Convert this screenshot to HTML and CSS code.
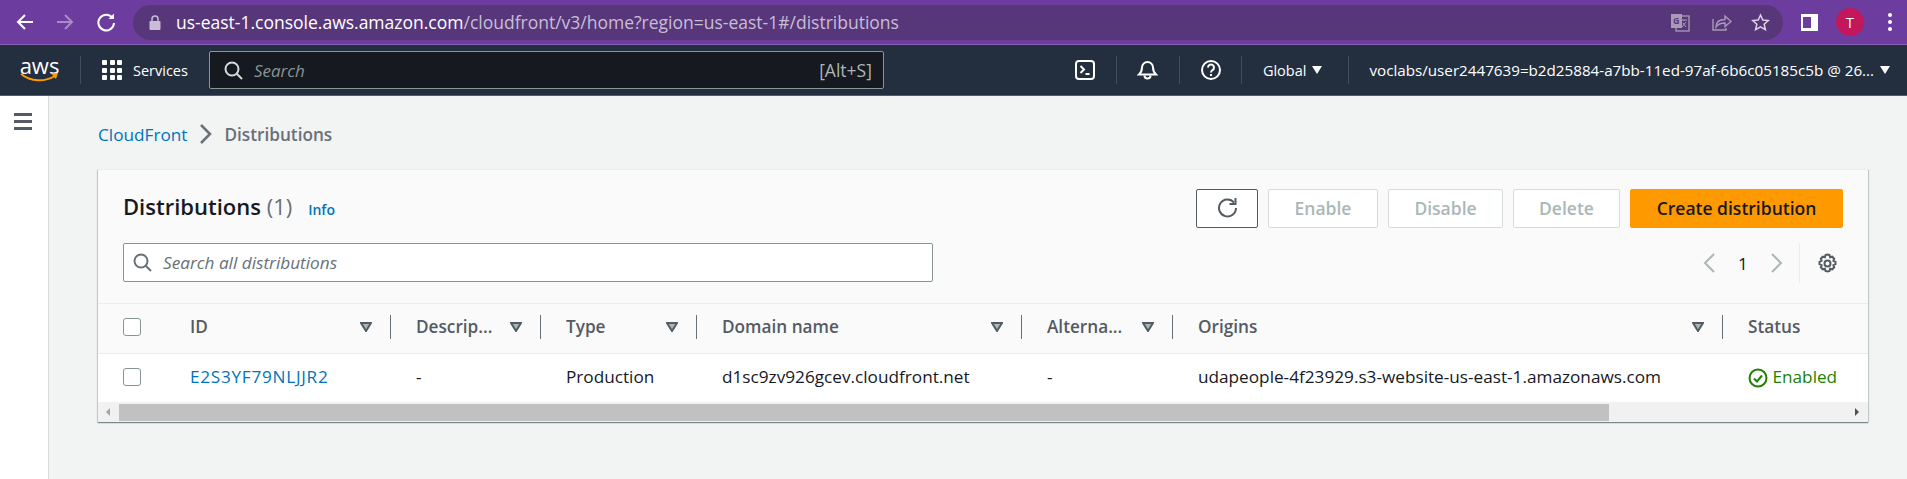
FILE: index.html
```html
<!DOCTYPE html>
<html lang="en">
<head>
  <meta charset="UTF-8">
  <title>Distributions | CloudFront</title>
  <link rel="stylesheet" href="styles.css">
</head>
<body>
<div class="browser-bar">
  <svg class="br-icon back" width="20" height="20" viewBox="0 0 20 20" fill="none" stroke="#fff" stroke-width="2"><path d="M18 10H3M10 3l-7 7 7 7"/></svg>
  <svg class="br-icon fwd" width="20" height="20" viewBox="0 0 20 20" fill="none" stroke="#a88bc9" stroke-width="2"><path d="M2 10h15M10 3l7 7-7 7"/></svg>
  <svg class="br-icon reload" width="20" height="20" viewBox="0 0 20 20" fill="none" stroke="#fff" stroke-width="2"><path d="M16.500 6A7.800 7.800 0 1 0 18 11"/><path d="M18 1.500V7h-5.500z" fill="#fff" stroke="none"/></svg>
  <div class="url-pill">
    <svg class="lock" width="12" height="15" viewBox="0 0 12 15"><path d="M3 6V4a3 3 0 0 1 6 0v2" fill="none" stroke="#c9bdd6" stroke-width="1.500"/><rect x="0.500" y="6" width="11" height="9" rx="1" fill="#c9bdd6"/></svg>
    <span class="url"><span class="url-host">us-east-1.console.aws.amazon.com</span>/cloudfront/v3/home?region=us-east-1#/distributions</span>
    <svg class="translate" width="20" height="19" viewBox="0 0 20 19"><rect x="6" y="3" width="13" height="15" fill="none" stroke="#a99bb8" stroke-width="1.300"/><rect x="1" y="1" width="11" height="14" fill="#a99bb8"/><text x="3" y="11" class="translate-g">G</text><path d="M11 7h6M14 7v1M12 14l4-5M13 10l3 4" fill="none" stroke="#a99bb8"/></svg>
    <svg class="share" width="20" height="18" viewBox="0 0 20 18" fill="none" stroke="#a99bb8" stroke-width="1.400"><path d="M1 6v11h13v-2"/><path d="M4 14c0-5 3-7.500 9-7.500V3l6 5.500-6 5V10c-4 0-7 1-9 4z"/></svg>
    <svg class="star" width="19" height="18" viewBox="0 0 19 18" fill="none" stroke="#dcd4e4" stroke-width="1.500"><path d="M9.500 2l2.300 5 5.500.6-4.100 3.700 1.200 5.400-4.900-2.800-4.900 2.800 1.200-5.400L1.700 7.600 7.200 7z"/></svg>
  </div>
  <div class="panel-toggle"><span></span></div>
  <div class="avatar">T</div>
  <div class="dots"><i></i><i></i><i></i></div>
</div>

<nav class="aws-nav">
  <div class="aws-logo">
    <span class="aws-word">aws</span>
    <svg width="39" height="11" viewBox="0 0 39 11" fill="none"><path d="M1 2c10 8 24 8 34 2" stroke="#f90" stroke-width="2"/><path d="M31 1.500l7-.5-2 6z" fill="#f90"/></svg>
  </div>
  <div class="nav-sep logo-sep"></div>
  <div class="grid-icon"><i></i><i></i><i></i><i></i><i></i><i></i><i></i><i></i><i></i></div>
  <span class="services">Services</span>
  <div class="nav-search">
    <svg width="19" height="19" viewBox="0 0 19 19" fill="none" stroke="#d5dbdb" stroke-width="2"><circle cx="8" cy="8" r="6.500"/><path d="M12.500 12.500l5.500 5.500"/></svg>
    <span class="nav-search-text">Search</span>
    <span class="nav-search-key">[Alt+S]</span>
  </div>
  <svg class="terminal" width="20" height="20" viewBox="0 0 20 20" fill="none" stroke="#fff" stroke-width="2"><rect x="1" y="1" width="18" height="18" rx="3"/><path d="M5.500 6l3.500 3.500-3.500 3.500M10.500 14h4"/></svg>
  <div class="nav-sep sep-a"></div>
  <svg class="bell" width="21" height="22" viewBox="0 0 21 22" fill="none" stroke="#fff" stroke-width="2"><path d="M2 15.500h17c-2-2-3-3-3-7a5.500 5.500 0 0 0-11 0c0 4-1 5-3 7z"/><path d="M7.500 16.500a3 3 0 0 0 6 0"/></svg>
  <div class="nav-sep sep-b"></div>
  <svg class="help" width="20" height="20" viewBox="0 0 20 20" fill="none" stroke="#fff" stroke-width="2"><circle cx="10" cy="10" r="9"/><path d="M7 7.500a3 3 0 1 1 4.500 2.600c-1 .6-1.500 1.200-1.500 2.400"/><path d="M10 14v2"/></svg>
  <div class="nav-sep sep-c"></div>
  <span class="region">Global</span>
  <span class="caret"></span>
  <div class="nav-sep sep-d"></div>
  <span class="account">voclabs/user2447639=b2d25884-a7bb-11ed-97af-6b6c05185c5b @ 26...</span>
  <span class="caret"></span>
</nav>

<div class="page">
  <aside class="side">
    <div class="burger"><i></i><i></i><i></i></div>
  </aside>
  <main class="content">
    <div class="crumbs">
      <a class="link">CloudFront</a>
      <svg width="13" height="22" viewBox="0 0 13 22" fill="none" stroke="#687078" stroke-width="2.500"><path d="M2 2l9 9-9 9"/></svg>
      <span class="crumb-now">Distributions</span>
    </div>

    <section class="card">
      <div class="card-head">
        <div class="head-left">
          <div class="title-row">
            <h1>Distributions <span class="count">(1)</span></h1>
            <a class="link info">Info</a>
          </div>
          <div class="filter">
            <svg width="19" height="19" viewBox="0 0 19 19" fill="none" stroke="#687078" stroke-width="2"><circle cx="8" cy="8" r="6.500"/><path d="M12.500 12.500l5.500 5.500"/></svg>
            <span>Search all distributions</span>
          </div>
        </div>
        <div class="head-right">
          <div class="actions">
            <button class="btn btn-refresh"><svg width="21" height="21" viewBox="0 0 21 21" fill="none" stroke="#545b64" stroke-width="2"><path d="M17 5.500A8.500 8.500 0 1 0 19 11"/><path d="M18.500 1v6h-6"/></svg></button>
            <button class="btn btn-enable">Enable</button>
            <button class="btn btn-disable">Disable</button>
            <button class="btn btn-delete">Delete</button>
            <button class="btn btn-primary">Create distribution</button>
          </div>
          <div class="pager">
            <svg width="14" height="22" viewBox="0 0 14 22" fill="none" stroke="#aab7b8" stroke-width="2"><path d="M12 2l-9 9 9 9"/></svg>
            <span class="page-num">1</span>
            <svg width="14" height="22" viewBox="0 0 14 22" fill="none" stroke="#aab7b8" stroke-width="2"><path d="M2 2l9 9-9 9"/></svg>
            <div class="pager-sep"></div>
            <svg class="gear" width="21" height="21" viewBox="0 0 21 21" fill="none" stroke="#545b64" stroke-width="2"><path d="M10.500 1.500l2 .6.6 2.200 2.200-.6 1.900 2-.8 2.100 2.100 1v2.400l-2.100 1 .8 2.100-1.900 2-2.200-.6-.6 2.200-2 .6-2-.6-.6-2.200-2.200.6-1.900-2 .8-2.100-2.100-1V8.800l2.100-1-.8-2.100 1.900-2 2.200.6.600-2.200z"/><circle cx="10.500" cy="10.500" r="3"/></svg>
          </div>
        </div>
      </div>

      <div class="table-wrap">
        <table class="dist-table">
          <colgroup>
            <col class="col-check"><col class="col-id"><col class="col-desc"><col class="col-type"><col class="col-domain"><col class="col-alt"><col class="col-origin"><col class="col-status">
          </colgroup>
          <thead>
            <tr>
              <th class="cell-check"><span class="box"></span></th>
              <th><div class="th-in"><span>ID</span><svg class="sort" width="12" height="10" viewBox="0 0 12 10"><path d="M1 1h10L6 9z" fill="#aab7b8" stroke="#545b64" stroke-width="2"/></svg></div></th>
              <th><div class="th-in"><span>Descrip...</span><svg class="sort" width="12" height="10" viewBox="0 0 12 10"><path d="M1 1h10L6 9z" fill="#aab7b8" stroke="#545b64" stroke-width="2"/></svg></div></th>
              <th><div class="th-in"><span>Type</span><svg class="sort" width="12" height="10" viewBox="0 0 12 10"><path d="M1 1h10L6 9z" fill="#aab7b8" stroke="#545b64" stroke-width="2"/></svg></div></th>
              <th><div class="th-in"><span>Domain name</span><svg class="sort" width="12" height="10" viewBox="0 0 12 10"><path d="M1 1h10L6 9z" fill="#aab7b8" stroke="#545b64" stroke-width="2"/></svg></div></th>
              <th><div class="th-in"><span>Alterna...</span><svg class="sort" width="12" height="10" viewBox="0 0 12 10"><path d="M1 1h10L6 9z" fill="#aab7b8" stroke="#545b64" stroke-width="2"/></svg></div></th>
              <th><div class="th-in"><span>Origins</span><svg class="sort" width="12" height="10" viewBox="0 0 12 10"><path d="M1 1h10L6 9z" fill="#aab7b8" stroke="#545b64" stroke-width="2"/></svg></div></th>
              <th class="th-last"><span>Status</span></th>
            </tr>
          </thead>
          <tbody>
            <tr>
              <td class="cell-check"><span class="box"></span></td>
              <td><a class="link dist-id">E2S3YF79NLJJR2</a></td>
              <td>-</td>
              <td>Production</td>
              <td>d1sc9zv926gcev.cloudfront.net</td>
              <td>-</td>
              <td>udapeople-4f23929.s3-website-us-east-1.amazonaws.com</td>
              <td class="status">
                <svg width="20" height="20" viewBox="0 0 20 20" fill="none" stroke="#1d8102" stroke-width="2"><circle cx="10" cy="10" r="8.500"/><path d="M6 10.500l3 3 5-6"/></svg>
                <span>Enabled</span>
              </td>
            </tr>
          </tbody>
        </table>
      </div>

      <div class="scrollbar">
        <span class="arrow arrow-left"></span>
        <div class="thumb"></div>
        <span class="arrow arrow-right"></span>
      </div>
    </section>
  </main>
</div>
</body>
</html>
```

FILE: styles.css
```css
html, body {
  margin: 0;
  height: 100%;
}
body {
  display: flex;
  flex-direction: column;
  overflow: hidden;
  font-family: "Open Sans", "Noto Sans", Arial, sans-serif;
  font-size: 17.200px;
  background-color: #f2f3f3;
  color: #16191f;
}
a.link {
  color: #0073bb;
}

/* browser toolbar */
.browser-bar {
  display: flex;
  align-items: center;
  height: 44px;
  background-color: #6c3d9f;
  border-bottom: 1px solid #8a63b4;
  flex-shrink: 0;
}
.br-icon { flex-shrink: 0; }
.back { margin-left: 15px; }
.fwd { margin-left: 20px; }
.reload { margin-left: 21px; }
.url-pill {
  display: flex;
  align-items: center;
  width: 1650px;
  height: 35px;
  margin-left: 17px;
  background-color: #57377a;
  border-radius: 18px;
}
.lock { margin-left: 16px; }
.url {
  margin-left: 15px;
  font-size: 17.500px;
  color: #c9bdd6;
  white-space: nowrap;
}
.url-host { color: #fff; }
.translate { margin-left: auto; }
.translate-g { font-size: 9px; font-weight: 700; fill: #57377a; }
.share { margin-left: 22px; }
.star { margin-left: 19px; margin-right: 13px; }
.panel-toggle {
  width: 17px;
  height: 17px;
  margin-left: 18px;
  background-color: #fff;
  padding: 0 3px 0 2px;
  box-sizing: border-box;
  display: flex;
  align-items: center;
}
.panel-toggle span {
  display: block;
  width: 8px;
  height: 11px;
  background-color: #6c3d9f;
}
.avatar {
  width: 28px;
  height: 28px;
  margin-left: 18px;
  border-radius: 50%;
  background-color: #c2185b;
  color: #fff;
  font-size: 15px;
  text-align: center;
  line-height: 28px;
}
.dots {
  display: flex;
  flex-direction: column;
  gap: 3px;
  margin-left: 24px;
}
.dots i {
  width: 4px;
  height: 4px;
  border-radius: 50%;
  background-color: #fff;
}

/* aws console nav */
.aws-nav {
  display: flex;
  align-items: center;
  height: 50px;
  background-color: #232f3e;
  border-bottom: 1px solid #545b64;
  color: #fff;
  flex-shrink: 0;
  font-size: 14.500px;
}
.aws-logo {
  display: flex;
  flex-direction: column;
  align-items: center;
  width: 39px;
  margin-left: 20px;
}
.aws-word {
  font-size: 22px;
  line-height: 17px;
  margin-bottom: -2px;
}
.aws-logo svg { display: block; }
.nav-sep {
  width: 1px;
  height: 28px;
  background-color: #414d5c;
  flex-shrink: 0;
}
.logo-sep { margin-left: 21px; }
.grid-icon {
  display: grid;
  grid-template-columns: repeat(3, 5px);
  gap: 2.500px;
  margin-left: 21px;
}
.grid-icon i {
  width: 5px;
  height: 5px;
  background-color: #fff;
  border-radius: 1px;
}
.services { margin-left: 11px; }
.nav-search {
  display: flex;
  align-items: center;
  width: 675px;
  height: 38px;
  margin-left: 21px;
  padding: 0 11px 0 14px;
  box-sizing: border-box;
  background-color: #16191f;
  border: 1px solid #879596;
  border-radius: 2px;
}
.nav-search-text {
  margin-left: 11px;
  font-style: italic;
  font-size: 17px;
  color: #879596;
}
.nav-search-key {
  margin-left: auto;
  color: #aab7b8;
  font-size: 17.500px;
}
.terminal { margin-left: 191px; }
.sep-a { margin-left: 21px; }
.bell { margin-left: 20px; }
.sep-b { margin-left: 21px; }
.help { margin-left: 21px; }
.sep-c { margin-left: 20px; }
.region { margin-left: 21px; }
.caret {
  width: 0;
  height: 0;
  margin-left: 6px;
  border-left: 5px solid transparent;
  border-right: 5px solid transparent;
  border-top: 8px solid #fff;
}
.sep-d { margin-left: 26px; }
.account {
  margin-left: 20px;
  font-size: 15.200px;
  white-space: nowrap;
}

/* page */
.page {
  display: flex;
  flex: 1;
  min-height: 0;
}
.side {
  width: 48px;
  flex-shrink: 0;
  background-color: #fff;
  border-right: 1px solid #d5dbdb;
}
.burger {
  display: flex;
  flex-direction: column;
  gap: 4.500px;
  width: 18px;
  margin: 17px 0 0 14px;
}
.burger i {
  height: 2.500px;
  background-color: #545b64;
}
.content {
  flex: 1;
  min-width: 0;
  padding: 0 39px 0 49px;
}
.crumbs {
  display: flex;
  align-items: center;
  gap: 12px;
  height: 73px;
  box-sizing: border-box;
  padding-top: 3px;
}
.crumb-now {
  font-weight: 600;
  color: #687078;
}

/* card */
.card {
  background-color: #fff;
  box-shadow: 0 1px 1px 0 rgba(0, 28, 36, .3), 1px 1px 1px 0 rgba(0, 28, 36, .15), -1px 1px 1px 0 rgba(0, 28, 36, .15);
}
.card-head {
  display: flex;
  justify-content: space-between;
  height: 135px;
  box-sizing: border-box;
  padding: 19px 25px 0 25px;
  background-color: #fafafa;
  border-top: 1px solid #eaeded;
  border-bottom: 1px solid #eaeded;
}
.title-row {
  display: flex;
  align-items: baseline;
  gap: 16px;
  height: 35px;
  padding-top: 3px;
}
h1 {
  margin: 0;
  font-size: 22px;
  font-weight: 600;
  line-height: 28px;
}
.count {
  font-weight: 400;
  color: #687078;
}
.info {
  font-size: 14px;
  font-weight: 600;
}
.filter {
  display: flex;
  align-items: center;
  gap: 11px;
  width: 810px;
  height: 39px;
  margin-top: 16px;
  padding-left: 9px;
  box-sizing: border-box;
  background-color: #fff;
  border: 1px solid #879596;
  border-radius: 2px;
  font-style: italic;
  color: #687078;
}
.head-right {
  display: flex;
  flex-direction: column;
  align-items: flex-end;
}
.actions {
  display: flex;
  gap: 10px;
}
.btn {
  height: 39px;
  box-sizing: border-box;
  background-color: #fff;
  border: 1px solid #d5dbdb;
  border-radius: 2px;
  font-family: inherit;
  font-size: 17.500px;
  font-weight: 600;
  color: #aab7b8;
  padding: 0 0 2px;
}
.btn-refresh {
  width: 62px;
  border-color: #545b64;
  padding: 3px 0 0;
}
.btn-enable { width: 110px; }
.btn-disable { width: 115px; }
.btn-delete { width: 107px; }
.btn-primary {
  width: 213px;
  background-color: #ff9900;
  border-color: #ff9900;
  color: #16191f;
}
.pager {
  display: flex;
  align-items: center;
  height: 40px;
  margin-top: 15px;
}
.page-num {
  width: 54px;
  text-align: center;
}
.pager-sep {
  width: 1px;
  height: 40px;
  margin-left: 15px;
  background-color: #eaeded;
}
.gear { margin-left: 17px; margin-right: 5px; }

/* table */
.table-wrap {
  overflow: hidden;
}
.dist-table {
  table-layout: fixed;
  width: 1794px;
  border-collapse: collapse;
}
.col-check { width: 67px; }
.col-id { width: 226px; }
.col-desc { width: 150px; }
.col-type { width: 156px; }
.col-domain { width: 325px; }
.col-alt { width: 151px; }
.col-origin { width: 550px; }
.col-status { width: 169px; }
th {
  height: 49px;
  padding: 0 0 3px;
  box-sizing: border-box;
  background-color: #fafafa;
  border-bottom: 1px solid #eaeded;
  text-align: left;
  color: #545b64;
  font-weight: 600;
}
.th-in {
  display: flex;
  align-items: center;
  justify-content: space-between;
  height: 24px;
  padding-left: 25px;
  padding-right: 18px;
  border-right: 1px solid #687078;
}
th.th-last { padding-left: 25px; }
th.cell-check, td.cell-check {
  padding-left: 25px;
}
.box {
  display: block;
  width: 16px;
  height: 16px;
  background-color: #fff;
  border: 1px solid #879596;
  border-radius: 3px;
}
td {
  height: 49px;
  padding: 0 0 3px 25px;
  box-sizing: border-box;
  background-color: #fff;
  white-space: nowrap;
}
td.cell-check { padding-bottom: 2px; }
.dist-id { letter-spacing: .72px; }
td.status {
  color: #1d8102;
  padding-left: 25px;
}
.status svg {
  vertical-align: -5px;
}
.scrollbar {
  display: flex;
  align-items: center;
  height: 20px;
  background-color: #f1f1f1;
}
.thumb {
  width: 1490px;
  height: 17px;
  margin-left: 9px;
  background-color: #c1c1c1;
}
.arrow {
  width: 0;
  height: 0;
  border-top: 4px solid transparent;
  border-bottom: 4px solid transparent;
}
.arrow-left {
  margin-left: 8px;
  border-right: 4px solid #a3a3a3;
}
.arrow-right {
  margin-left: 246px;
  border-left: 4px solid #505050;
}
```
